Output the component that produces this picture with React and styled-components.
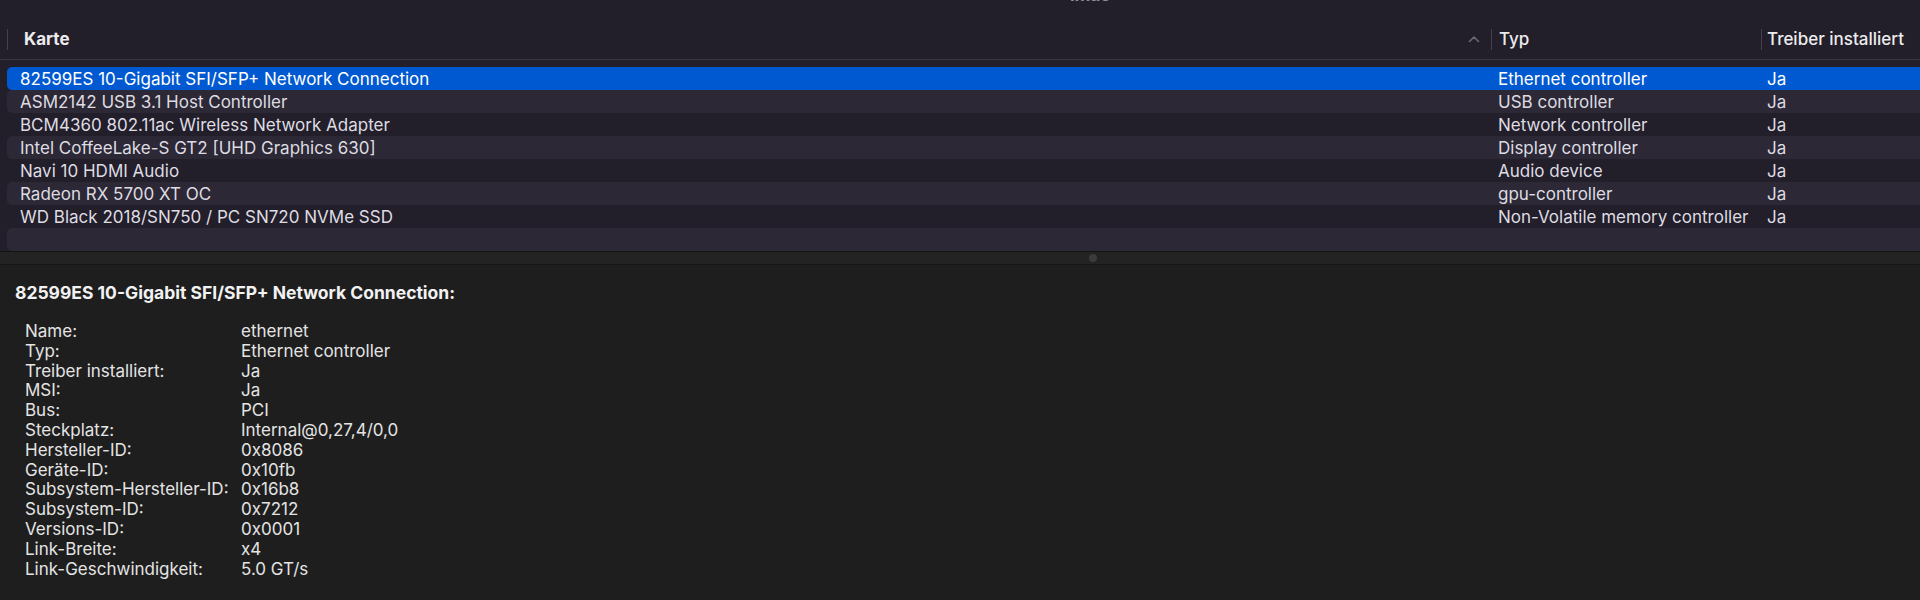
import React from "react";
import styled, { createGlobalStyle } from "styled-components";

const GlobalStyle = createGlobalStyle`
  html, body {
    margin: 0;
    padding: 0;
    background: #1e1e1e;
  }
  body {
    font-family: Inter, "Noto Sans", "Liberation Sans", sans-serif;
    -webkit-font-smoothing: antialiased;
  }
`;

const devices = [
  ["82599ES 10-Gigabit SFI/SFP+ Network Connection", "Ethernet controller", "Ja"],
  ["ASM2142 USB 3.1 Host Controller", "USB controller", "Ja"],
  ["BCM4360 802.11ac Wireless Network Adapter", "Network controller", "Ja"],
  ["Intel CoffeeLake-S GT2 [UHD Graphics 630]", "Display controller", "Ja"],
  ["Navi 10 HDMI Audio", "Audio device", "Ja"],
  ["Radeon RX 5700 XT OC", "gpu-controller", "Ja"],
  ["WD Black 2018/SN750 / PC SN720 NVMe SSD", "Non-Volatile memory controller", "Ja"],
  ["", "", ""],
];

const details = [
  ["Name:", "ethernet"],
  ["Typ:", "Ethernet controller"],
  ["Treiber installiert:", "Ja"],
  ["MSI:", "Ja"],
  ["Bus:", "PCI"],
  ["Steckplatz:", "Internal@0,27,4/0,0"],
  ["Hersteller-ID:", "0x8086"],
  ["Geräte-ID:", "0x10fb"],
  ["Subsystem-Hersteller-ID:", "0x16b8"],
  ["Subsystem-ID:", "0x7212"],
  ["Versions-ID:", "0x0001"],
  ["Link-Breite:", "x4"],
  ["Link-Geschwindigkeit:", "5.0 GT/s"],
];

function App() {
  const selected = 0;
  return (
    <Window>
      <GlobalStyle />
      <ListPane>
        <TitleBar>
          <WindowTitle>iMac</WindowTitle>
        </TitleBar>
        <Header>
          <HeaderCell $pad={16} $bold>
            Karte
            <SortIcon width="12" height="8" viewBox="0 0 12 8">
              <path d="M1.5 6.5 L6 2 L10.5 6.5" fill="none" stroke="#6b6873" strokeWidth="1.6" strokeLinecap="round" strokeLinejoin="round" />
            </SortIcon>
          </HeaderCell>
          <HeaderCell $pad={7}>Typ</HeaderCell>
          <HeaderCell $pad={5}>Treiber installiert</HeaderCell>
        </Header>
        <Rows>
          {devices.map((d, i) => (
            <Row key={i} $selected={i === selected} $striped={i % 2 === 1}>
              <Cell $pad={13}>{d[0]}</Cell>
              <Cell $pad={7}>{d[1]}</Cell>
              <Cell $pad={6}>{d[2]}</Cell>
            </Row>
          ))}
        </Rows>
      </ListPane>
      <Splitter>
        <Grip />
      </Splitter>
      <DetailPane>
        <DetailTitle>82599ES 10-Gigabit SFI/SFP+ Network Connection:</DetailTitle>
        <DetailGrid>
          {details.map(([k, v]) => (
            <React.Fragment key={k}>
              <DetailLabel>{k}</DetailLabel>
              <DetailValue>{v}</DetailValue>
            </React.Fragment>
          ))}
        </DetailGrid>
      </DetailPane>
    </Window>
  );
}

const Window = styled.div`
  width: 1920px;
  height: 600px;
  overflow: hidden;
  display: flex;
  flex-direction: column;
  background: #1e1e1e;
`;

const ListPane = styled.div`
  background: #221e2a;
  height: 251px;
  overflow: hidden;
  display: flex;
  flex-direction: column;
`;

const TitleBar = styled.div`
  height: 20px;
  overflow: hidden;
  padding-left: 1070px;
`;

const WindowTitle = styled.div`
  margin-top: -14px;
  font-size: 17px;
  line-height: 18px;
  font-weight: 700;
  color: #8f8c96;
`;

const Header = styled.div`
  display: grid;
  grid-template-columns: 1491px 270px 1fr;
  height: 41px;
  align-items: center;
  border-bottom: 1px solid #38353f;
  box-sizing: border-box;
`;

const HeaderCell = styled.div`
  display: flex;
  align-items: center;
  height: 21px;
  margin-left: ${(p) => (p.$bold ? "7px" : "0")};
  padding-left: ${(p) => p.$pad}px;
  border-left: 1.5px solid #45424c;
  font-size: 17px;
  font-weight: ${(p) => (p.$bold ? 700 : 500)};
  color: #ececee;
  white-space: nowrap;
`;

const SortIcon = styled.svg`
  margin-left: auto;
  margin-right: 11px;
`;

const Rows = styled.div`
  padding-top: 7px;
  display: flex;
  flex-direction: column;
`;

const Row = styled.div`
  display: grid;
  grid-template-columns: 1484px 270px 1fr;
  height: 23px;
  flex-shrink: 0;
  align-items: center;
  margin-left: 7px;
  margin-right: -10px;
  border-radius: 5px;
  background: ${(p) => (p.$selected ? "#0059d1" : p.$striped ? "#2c2835" : "transparent")};
  color: ${(p) => (p.$selected ? "#ffffff" : "#dedce2")};
  font-size: 17px;
`;

const Cell = styled.div`
  padding-left: ${(p) => p.$pad}px;
  white-space: nowrap;
`;

const Splitter = styled.div`
  height: 12px;
  background: #232323;
  border-top: 1px solid #131313;
  border-bottom: 1px solid #171717;
  display: flex;
  align-items: center;
  padding-left: 1089px;
`;

const Grip = styled.div`
  width: 8px;
  height: 8px;
  border-radius: 50%;
  background: #3b3b3b;
`;

const DetailPane = styled.div`
  flex: 1;
  padding: 18px 0 0 15px;
  color: #e4e4e4;
`;

const DetailTitle = styled.div`
  font-size: 17.5px;
  line-height: 20px;
  font-weight: 700;
  color: #f2f2f2;
`;

const DetailGrid = styled.div`
  display: grid;
  grid-template-columns: 216px 1fr;
  margin: 19px 0 0 10px;
  font-size: 17px;
  line-height: 19.8px;
`;

const DetailLabel = styled.div`
  white-space: nowrap;
`;

const DetailValue = styled.div`
  white-space: nowrap;
`;

export default App;
